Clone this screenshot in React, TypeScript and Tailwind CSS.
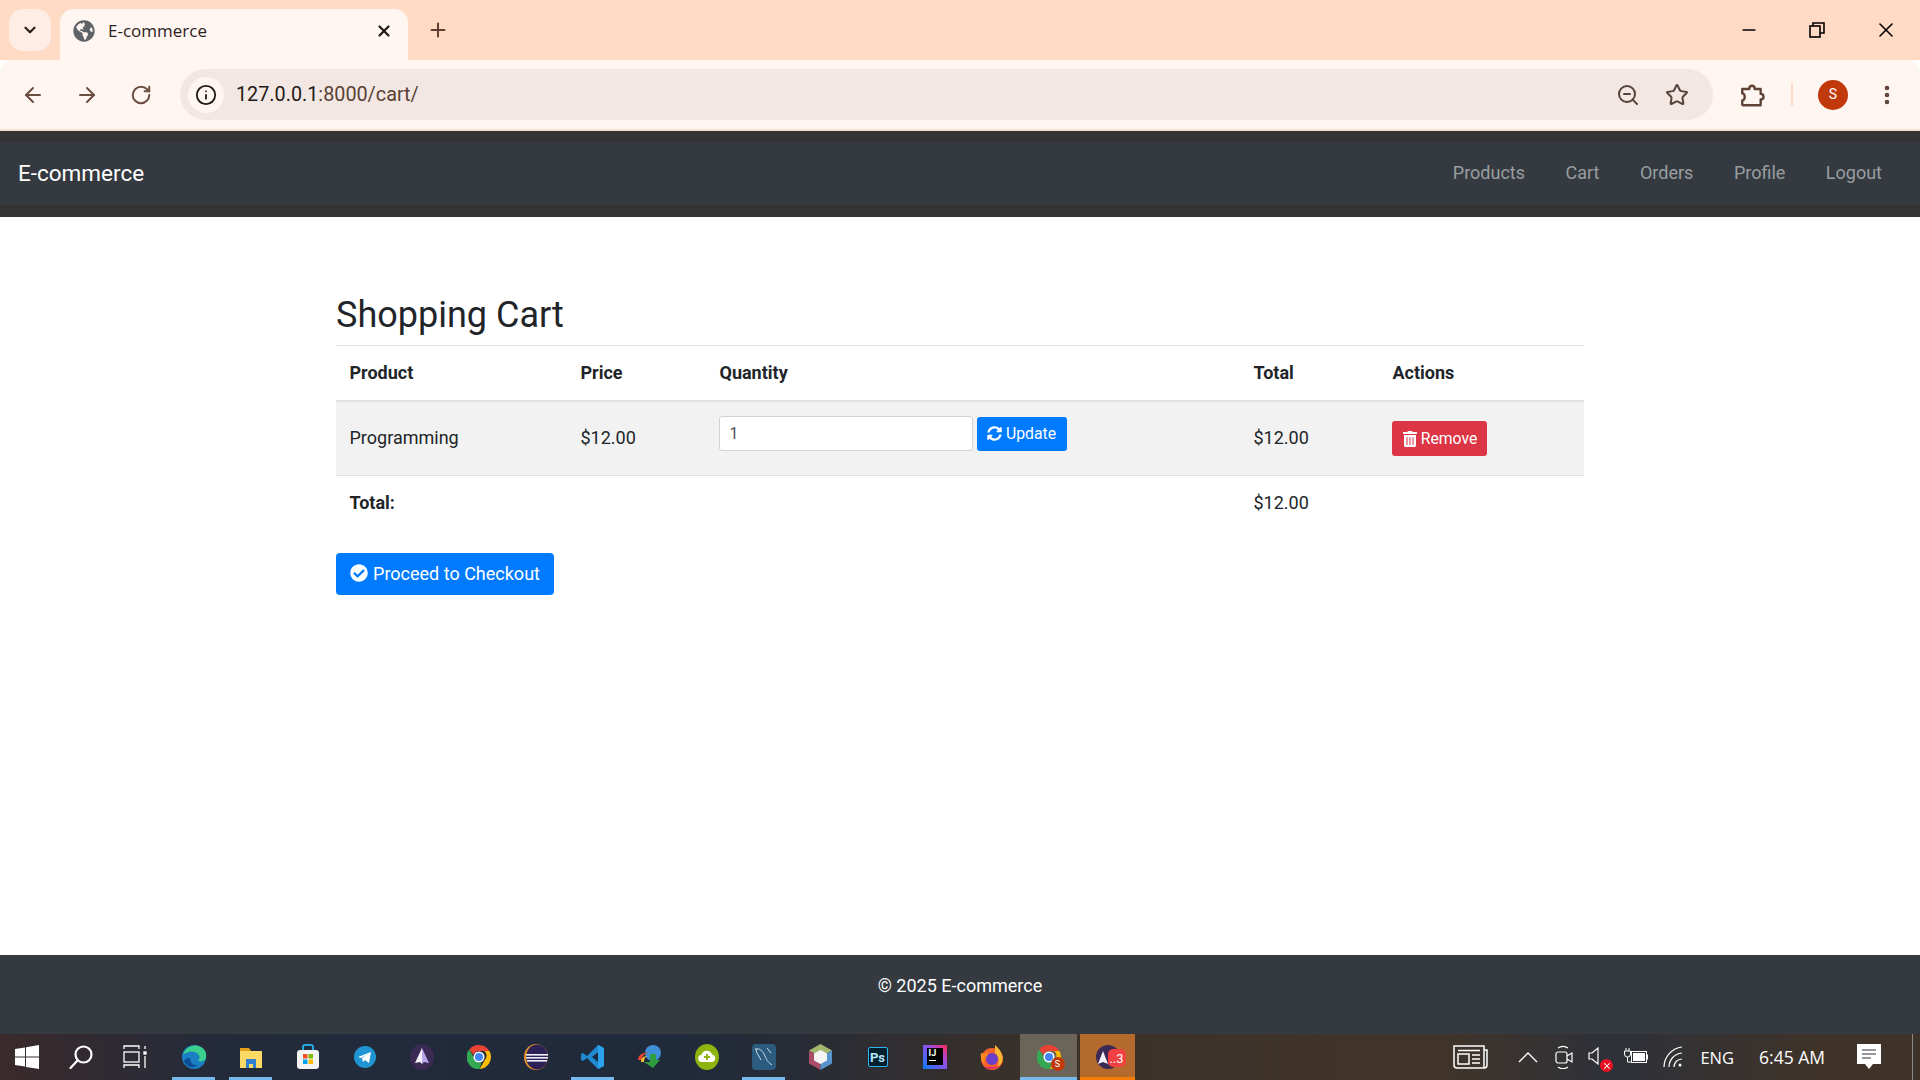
import React from 'react';
import {
  ArrowLeft, ArrowRight, RotateCw, ZoomOut, Star, EllipsisVertical, ChevronDown, X, Plus, Info, Minus,
} from 'lucide-react';
import { FaSyncAlt, FaTrashAlt, FaCheckCircle, FaGlobeAmericas } from 'react-icons/fa';

const ChromeLogo: React.FC<{ size?: number }> = ({ size = 24 }) => (
  <svg width={size} height={size} viewBox="4 4 40 40">
    <path d="M24 4a20 20 0 0 1 17.3 10H24a10 10 0 0 0-9.3 6.3L7.8 11.5A20 20 0 0 1 24 4z" fill="#ea4335" />
    <path d="M41.3 14A20 20 0 0 1 25 44l8.6-15a10 10 0 0 0-.8-15z" fill="#fbbc04" />
    <path d="M7.8 11.500L16 26a10 10 0 0 0 12 7.500L25 44A20 20 0 0 1 7.800 11.500z" fill="#34a853" />
    <circle cx="24" cy="24" r="8" fill="#4285f4" stroke="#fff" strokeWidth="2.5" />
  </svg>
);

const taskApps: { key: string; line?: boolean; icon: React.ReactNode }[] = [
  {
    key: 'edge',
    line: true,
    icon: (
      <svg width="26" height="26" viewBox="0 0 26 26">
        <circle cx="13" cy="13" r="12" fill="#1b7fc4" />
        <path d="M2 11C4 3 13-1 20 3c4 2 6 6 5 11-1 3-5 4-8 3 2-2 2-5 0-7-4-4-11-3-15 1z" fill="#3bd08d" />
        <path d="M9 14c0 5 4 8 8 7-5 4-12 2-14-4 1-2 3-3 6-3z" fill="#0c4f96" />
      </svg>
    ),
  },
  {
    key: 'files',
    line: true,
    icon: (
      <svg width="24" height="24" viewBox="0 0 24 24">
        <path d="M1 3h9l2 3H1z" fill="#e3a21a" />
        <path d="M1 6h22v17H1z" fill="#fcd964" />
        <path d="M7 14h10v9h-3v-4h-4v4H7z" fill="#2f7fd1" />
      </svg>
    ),
  },
  {
    key: 'store',
    icon: (
      <svg width="24" height="26" viewBox="0 0 24 26">
        <path d="M7 7V3a2 2 0 0 1 2-2h6a2 2 0 0 1 2 2v4" fill="none" stroke="#22a7e0" strokeWidth="2" />
        <rect x="1" y="6" width="22" height="19" rx="3" fill="#f3f3f3" />
        <rect x="7" y="10" width="4.500" height="4.500" fill="#f25022" />
        <rect x="12.500" y="10" width="4.500" height="4.500" fill="#7fba00" />
        <rect x="7" y="15.500" width="4.500" height="4.500" fill="#00a4ef" />
        <rect x="12.500" y="15.500" width="4.500" height="4.500" fill="#ffb900" />
      </svg>
    ),
  },
  {
    key: 'telegram',
    icon: (
      <svg width="24" height="24" viewBox="0 0 24 24">
        <circle cx="12" cy="12" r="11" fill="#1f96d3" />
        <path d="M5 12l13-5-2 11-4-3-2 2-1-4 6-4-7 4z" fill="#fff" />
      </svg>
    ),
  },
  {
    key: 'arrow',
    icon: (
      <svg width="24" height="26" viewBox="0 0 24 26">
        <ellipse cx="12" cy="13" rx="12" ry="13" fill="#3a2a54" />
        <path d="M12 4l7 15-5-1-2 2z" fill="#b9a6e8" />
        <path d="M12 4L5 19l5-1 2 2z" fill="#f5f2fb" />
      </svg>
    ),
  },
  { key: 'chrome', icon: <ChromeLogo size={24} /> },
  {
    key: 'eclipse',
    icon: (
      <svg width="24" height="26" viewBox="0 0 24 26">
        <ellipse cx="12" cy="13" rx="12" ry="13" fill="#e8912a" />
        <ellipse cx="13" cy="13" rx="11" ry="12.500" fill="#2c2255" />
        <rect x="2" y="10" width="22" height="1.600" fill="#f4f2fa" />
        <rect x="2" y="13" width="22" height="1.600" fill="#f4f2fa" />
        <rect x="3" y="16" width="20" height="1.600" fill="#f4f2fa" />
      </svg>
    ),
  },
  {
    key: 'vscode',
    line: true,
    icon: (
      <svg width="25" height="26" viewBox="0 0 25 26">
        <path d="M18 1l6 3v18l-6 3L7 14l-4 3-2-1v-6l2-1 4 3z" fill="#1f8ad2" />
        <path d="M18 1l6 3v18l-6 3z" fill="#2aa3ec" />
        <path d="M18 8l-6 5 6 5z" fill="#1b2a3d" />
      </svg>
    ),
  },
  {
    key: 'idm',
    icon: (
      <svg width="26" height="26" viewBox="0 0 26 26">
        <circle cx="16" cy="9" r="8" fill="#3f8fd8" />
        <path d="M1 16c0-5 5-8 10-7-4 1-6 3-6 7z" fill="#e4472d" />
        <path d="M4 18c0-4 3-6 6-6-2 1-3 3-3 6z" fill="#f1c232" />
        <path d="M13 10h6v6h4l-7 8-9-6h6z" fill="#2f9e3f" />
      </svg>
    ),
  },
  {
    key: 'cloud',
    icon: (
      <svg width="24" height="26" viewBox="0 0 24 26">
        <ellipse cx="12" cy="13" rx="12" ry="13" fill="#8fb30f" />
        <path d="M7 18a3.500 3.500 0 0 1-.5-7 5.500 5.500 0 0 1 10.500-.5A3.800 3.800 0 0 1 17 18z" fill="#fff" />
        <path d="M11 10h2v2h2v2h-2v2h-2v-2H9v-2h2z" fill="#8fb30f" />
      </svg>
    ),
  },
  {
    key: 'mysql',
    line: true,
    icon: (
      <svg width="24" height="26" viewBox="0 0 24 26">
        <rect width="24" height="26" rx="4" fill="#2b5b7f" />
        <path d="M3 5c5-1 8 2 10 7s4 7 7 9M4 5c0 5 3 6 5 11M15 4l4 5" fill="none" stroke="#cfdce6" strokeWidth="1" />
      </svg>
    ),
  },
  {
    key: 'netbeans',
    icon: (
      <svg width="23" height="26" viewBox="0 0 23 26">
        <path d="M11.500 0L23 6.500 11.500 13 0 6.500z" fill="#a3b86c" />
        <path d="M0 6.500L11.500 13v13L0 19.500z" fill="#a84c68" />
        <path d="M23 6.500L11.500 13v13L23 19.500z" fill="#5a94cf" />
        <path d="M11.500 6L18 9.500v7L11.500 20 5 16.500v-7z" fill="#f4f4f4" />
      </svg>
    ),
  },
  {
    key: 'ps',
    icon: (
      <div className="flex h-[20px] w-[20px] items-center justify-center rounded-[2px] border border-[#2fb6f0] bg-[#04202f] text-[13px] font-bold leading-none text-[#b5e4fa]">
        Ps
      </div>
    ),
  },
  {
    key: 'intellij',
    icon: (
      <div className="relative h-[24px] w-[24px] bg-[linear-gradient(45deg,#087cfa,#9a4ee6_60%,#fe2857)]">
        <div className="absolute left-[4px] top-[3px] h-[17px] w-[16px] bg-black pl-[2px] text-[9px] font-bold leading-[10px] text-white">
          IJ
          <div className="mt-[2px] h-[1px] w-[7px] bg-white" />
        </div>
      </div>
    ),
  },
  {
    key: 'firefox',
    icon: (
      <svg width="24" height="25" viewBox="0 0 24 25">
        <circle cx="12" cy="14" r="11" fill="#f4612c" />
        <path d="M15 0c6 5 9 11 7 17-1 2-3 4-5 5 3-5 2-11-2-14z" fill="#fdb62f" />
        <path d="M1 8l4 1 3-3c-1 3 0 4 2 5-5 1-7 5-5 9-3-3-5-7-4-12z" fill="#ff8a1f" />
        <circle cx="12" cy="14" r="6" fill="#6b3fcb" />
        <path d="M4 22c5 3 12 2 15-1-5 2-10 1-15 1z" fill="#e31587" />
      </svg>
    ),
  },
];

const App: React.FC = () => (
  <div className="flex h-screen flex-col overflow-hidden bg-white font-['Roboto',sans-serif] text-[18px] leading-[27px] text-[#212529]">
    {/* browser tab strip */}
    <div className="flex h-[60px] shrink-0 bg-[#ffdac5]">
      <div className="ml-[9px] mt-[9px] flex h-[42px] w-[42px] items-center justify-center rounded-[14px] bg-[#ffece3]">
        <ChevronDown size={18} strokeWidth={3} className="text-[#2b211c]" />
      </div>
      <div className="ml-[9px] mt-[9px] flex h-[51px] w-[348px] items-center rounded-t-[14px] bg-[#fff6f2] pb-[8px] pl-[13px] pr-[15px]">
        <FaGlobeAmericas size={22} className="text-[#5f6368]" />
        <span className="ml-[13px] flex-1 font-['Open_Sans',sans-serif] text-[17px] text-[#2b211c]">E-commerce</span>
        <X size={18} strokeWidth={3} className="text-[#1f1a17]" />
      </div>
      <div className="ml-[19px] flex items-center">
        <Plus size={22} strokeWidth={2.2} className="text-[#5c4033]" />
      </div>
      <div className="flex-1" />
      <div className="flex items-center pr-[22px]">
        <Minus size={20} strokeWidth={2} className="text-black" />
        <svg width="16" height="16" viewBox="0 0 16 16" className="ml-[50px]" fill="none" stroke="#000" strokeWidth="1.600">
          <rect x="1" y="4" width="10" height="11" />
          <path d="M4 4V1h11v10h-4" />
        </svg>
        <X size={24} strokeWidth={1.6} className="ml-[49px] text-black" />
      </div>
    </div>

    {/* toolbar */}
    <div className="flex h-[69px] shrink-0 items-center rounded-t-[14px] bg-[#fff6f2] pl-[21px]">
      <ArrowLeft size={24} strokeWidth={2} className="shrink-0 text-[#6b4f41]" />
      <ArrowRight size={24} strokeWidth={2} className="ml-[30px] shrink-0 text-[#6b4f41]" />
      <RotateCw size={22} strokeWidth={2.2} className="ml-[31px] shrink-0 text-[#6b4f41]" />
      <div className="ml-[28px] flex h-[51px] w-[1533px] shrink-0 items-center rounded-full bg-[#f2e7e3] pl-[8px] pr-[24px]">
        <div className="flex h-[36px] w-[36px] items-center justify-center rounded-full bg-[#fff6f2]">
          <Info size={22} strokeWidth={2} className="text-[#1f1a17]" />
        </div>
        <span className="ml-[12px] flex-1 text-[19.8px] text-[#5a4034]">
          <span className="text-[#241a15]">127.0.0.1</span>:8000/cart/
        </span>
        <ZoomOut size={24} strokeWidth={2} className="text-[#54443c]" />
        <Star size={24} strokeWidth={2} className="ml-[25px] text-[#54443c]" />
      </div>
      <svg width="26" height="26" viewBox="0 0 24 24" className="ml-[26px] shrink-0" fill="none" stroke="#5f4436" strokeWidth="2.200" strokeLinejoin="round">
        <path d="M3 6.500h6.500c0-4 5-4 5 0H20V11c3.500 0 3.500 5 0 5v5.500H4a1 1 0 0 1-1-1V17c3 0 3-6.500 0-6.500z" />
      </svg>
      <div className="ml-[26px] h-[23px] w-[2px] shrink-0 bg-[#ffdac5]" />
      <div className="ml-[25px] flex h-[30px] w-[30px] shrink-0 items-center justify-center rounded-full bg-[#c1380a] text-[14px] text-white">
        S
      </div>
      <EllipsisVertical size={24} strokeWidth={2.600} className="ml-[27px] shrink-0 text-[#5f4436]" />
    </div>
    <div className="h-[2px] shrink-0 bg-[#f8dccd]" />

    {/* navbar */}
    <div className="shrink-0 bg-[#343434] pb-[12px] pt-[11px]">
      <nav className="flex h-[63px] items-center justify-between bg-[#343a40] pb-[2px] pl-[18px] pr-[38px]">
        <span className="mt-[1px] text-[22.5px] text-white">E-commerce</span>
        <div className="flex gap-[40.500px] text-[#9a9da0]">
          <span>Products</span>
          <span>Cart</span>
          <span>Orders</span>
          <span>Profile</span>
          <span>Logout</span>
        </div>
      </nav>
    </div>

    {/* cart */}
    <main className="flex-1 pt-[77px]">
      <div className="mx-auto w-[1248px]">
        <h2 className="mb-[8px] text-[36px] font-normal leading-[43px]">Shopping Cart</h2>
        <table className="mb-[24px] w-full table-fixed border-collapse">
          <colgroup>
            <col className="w-[231px]" />
            <col className="w-[139px]" />
            <col className="w-[534px]" />
            <col className="w-[139px]" />
            <col />
          </colgroup>
          <thead>
            <tr className="border-b-2 border-t border-[#dee2e6]">
              <th className="px-[13.5px] pb-[14.5px] pt-[12.5px] text-left font-bold">Product</th>
              <th className="px-[13.5px] pb-[14.5px] pt-[12.5px] text-left font-bold">Price</th>
              <th className="px-[13.5px] pb-[14.5px] pt-[12.5px] text-left font-bold">Quantity</th>
              <th className="px-[13.5px] pb-[14.5px] pt-[12.5px] text-left font-bold">Total</th>
              <th className="px-[13.5px] pb-[14.5px] pt-[12.5px] text-left font-bold">Actions</th>
            </tr>
          </thead>
          <tbody>
            <tr className="border-b border-[#dee2e6] bg-[#f2f2f2]">
              <td className="px-[13.5px] pb-[14.5px] pt-[12.5px]">Programming</td>
              <td className="px-[13.5px] pb-[14.5px] pt-[12.5px]">$12.00</td>
              <td className="pb-[24px] pl-[12.5px] pr-[13.5px] pt-[14px] align-top">
                <div className="flex items-center gap-[4px]">
                  <input
                    readOnly
                    value="1"
                    className="h-[35px] w-[254px] rounded-[3px] border border-[#ced4da] bg-white px-[10px] text-[15.75px] leading-none text-[#495057]"
                  />
                  <button className="flex h-[34px] w-[90px] items-center justify-center gap-[4px] rounded-[3px] bg-[#007bff] text-[15.75px] text-white">
                    <FaSyncAlt size={15} />
                    Update
                  </button>
                </div>
              </td>
              <td className="px-[13.5px] pb-[14.5px] pt-[12.5px]">$12.00</td>
              <td className="p-[13.5px] pl-[13px]">
                <button className="flex h-[35px] w-[95px] items-center justify-center gap-[3px] rounded-[3px] bg-[#dc3545] text-[15.75px] text-white">
                  <FaTrashAlt size={16} />
                  Remove
                </button>
              </td>
            </tr>
            <tr>
              <td className="px-[13.5px] pb-[13.5px] pt-[12.5px] font-bold">Total:</td>
              <td className="p-[13.5px]" />
              <td className="p-[13.5px]" />
              <td className="px-[13.5px] pb-[13.5px] pt-[12.5px]">$12.00</td>
              <td className="p-[13.5px]" />
            </tr>
          </tbody>
        </table>
        <button className="flex h-[42px] w-[218px] items-center justify-center gap-[5px] rounded-[4px] bg-[#007bff] pb-[2px] text-[18px] text-white">
          <FaCheckCircle size={18} />
          Proceed to Checkout
        </button>
      </div>
    </main>

    {/* footer */}
    <footer className="flex h-[79px] shrink-0 items-start justify-center bg-[#343a40] pt-[17px] text-white">
      © 2025 E-commerce
    </footer>

    {/* windows taskbar */}
    <div className="flex h-[46px] shrink-0 items-stretch bg-[linear-gradient(90deg,#3a2a2b_0%,#232b3b_12%,#1f2a3b_35%,#3c3129_55%,#40342a_75%,#2e3139_84%,#3f3329_95%)] text-white">
      <div className="flex w-[54px] items-center justify-center">
        <svg width="24" height="24" viewBox="0 0 24 24" fill="#fff">
          <path d="M0 4l10-1.500V11.500H0zM11 2.300L24 0v11.500H11zM0 12.500h10v9L0 20zM11 12.500h13V24l-13-2z" />
        </svg>
      </div>
      <div className="flex w-[54px] items-center justify-center">
        <svg width="24" height="24" viewBox="0 0 24 24" fill="none" stroke="#fff" strokeWidth="2.200">
          <circle cx="14.500" cy="9.500" r="8" />
          <path d="M8.500 15.500L1.500 23" strokeLinecap="round" />
        </svg>
      </div>
      <div className="flex w-[54px] items-center justify-center">
        <svg width="24" height="24" viewBox="0 0 24 24" fill="none" stroke="#fff" strokeWidth="1.300">
          <path d="M1 4V1h15v3M1 23v-3h15v3M22 1v3M22 11v12" />
          <rect x="1" y="7" width="15" height="10" />
          <rect x="21" y="7" width="2" height="2" fill="#fff" />
        </svg>
      </div>
      <div className="w-[3px]" />
      {taskApps.map((app) => (
        <div key={app.key} className="relative flex w-[57px] items-center justify-center">
          {app.icon}
          {app.line && <div className="absolute bottom-0 left-[7px] right-[7px] h-[3px] bg-[#76b9ed]" />}
        </div>
      ))}
      <div className="relative flex w-[57px] items-center justify-center bg-[#6b6559]">
        <div className="relative flex">
          <ChromeLogo size={24} />
          <div className="absolute -bottom-[2px] -right-[4px] flex h-[14px] w-[14px] items-center justify-center rounded-full bg-[#c1380a] text-[9px] leading-none">
            S
          </div>
        </div>
        <div className="absolute bottom-0 left-0 right-0 h-[3px] bg-[#76b9ed]" />
      </div>
      <div className="w-[3px]" />
      <div className="relative flex w-[55px] items-center justify-center bg-[#b36a2c]">
        <div className="relative h-[24px] w-[24px] rounded-full bg-[#3a2a54]">
          <svg width="12" height="14" viewBox="0 0 12 14" className="absolute left-[1px] top-[6px]">
            <path d="M6 0l5 13-5-2-5 2z" fill="#f5f2fb" />
          </svg>
          <div className="absolute -right-[6px] top-[4px] flex h-[18px] w-[18px] items-center justify-center rounded-[5px] bg-[#f04040] text-[13px] leading-none">
            ..3
          </div>
        </div>
        <div className="absolute bottom-0 left-0 right-0 h-[3px] bg-[#f57c00]" />
      </div>
      <div className="flex-1" />
      <div className="flex items-center">
        <svg width="36" height="24" viewBox="0 0 36 24" fill="none" stroke="#fff" strokeWidth="1.500">
          <path d="M1 1h30v22H4a3 3 0 0 1-3-3zM31 5h3v15a3 3 0 0 1-3 3" />
          <rect x="5" y="9" width="11" height="10" />
          <path d="M5 5.500h22M19 10h8M19 14h8M19 18h8" />
        </svg>
        <svg width="20" height="12" viewBox="0 0 20 12" fill="none" stroke="#fff" strokeWidth="1.300" className="ml-[29px]">
          <path d="M1 11l9-9 9 9" />
        </svg>
        <svg width="18" height="24" viewBox="0 0 18 24" fill="none" stroke="#fff" strokeWidth="1.200" className="ml-[17px]">
          <rect x="1" y="7" width="11" height="11" rx="2" />
          <path d="M12 11l5-3v9l-5-3M3 3c3-2 7-2 10 0M3 22c3 2 7 2 10 0" />
        </svg>
        <div className="relative ml-[15px] h-[24px] w-[24px]">
          <svg width="14" height="20" viewBox="0 0 14 20" fill="none" stroke="#fff" strokeWidth="1.200" className="absolute left-0 top-[1px]">
            <path d="M1 7h3l6-5v16l-6-5H1z" />
          </svg>
          <div className="absolute bottom-[-3px] right-[-1px] flex h-[13px] w-[13px] items-center justify-center rounded-full bg-[#e81123]">
            <X size={10} strokeWidth={2.500} className="text-white" />
          </div>
        </div>
        <svg width="24" height="18" viewBox="0 0 24 18" className="ml-[12px]" fill="none" stroke="#fff" strokeWidth="1">
          <path d="M2 0v3M5 0v3M0.500 3h6v3a3 3 0 0 1-6 0zM3.500 9v5h4" />
          <rect x="7.500" y="3.500" width="15" height="11" />
          <rect x="9" y="5" width="12" height="8" fill="#fff" stroke="none" />
          <rect x="23" y="6.500" width="1" height="5" fill="#fff" stroke="none" />
        </svg>
        <svg width="20" height="22" viewBox="0 0 20 22" fill="none" stroke="#fff" strokeWidth="1.200" className="ml-[15px]">
          <path d="M1 21C1 11 9 2 19 1M6 21c0-7 5-13 13-14M11 21c0-4 3-8 8-8" />
          <circle cx="17" cy="19" r="1.500" fill="#fff" stroke="none" />
        </svg>
        <span className="ml-[17px] font-['Open_Sans',sans-serif] text-[16.500px]">ENG</span>
        <span className="ml-[25px] font-['Open_Sans',sans-serif] text-[17.500px]">6:45 AM</span>
        <svg width="24" height="26" viewBox="0 0 24 26" className="ml-[32px]">
          <path d="M0 0h24v20h-8l-4 5-4-5H0z" fill="#fff" />
          <path d="M5 6h14M5 10h14M5 14h9" stroke="#2e3139" strokeWidth="1.200" />
        </svg>
        <div className="ml-[31px] h-full w-[1px] bg-[#8a8a8a]" />
        <div className="w-[7px]" />
      </div>
    </div>
  </div>
);

export default App;
